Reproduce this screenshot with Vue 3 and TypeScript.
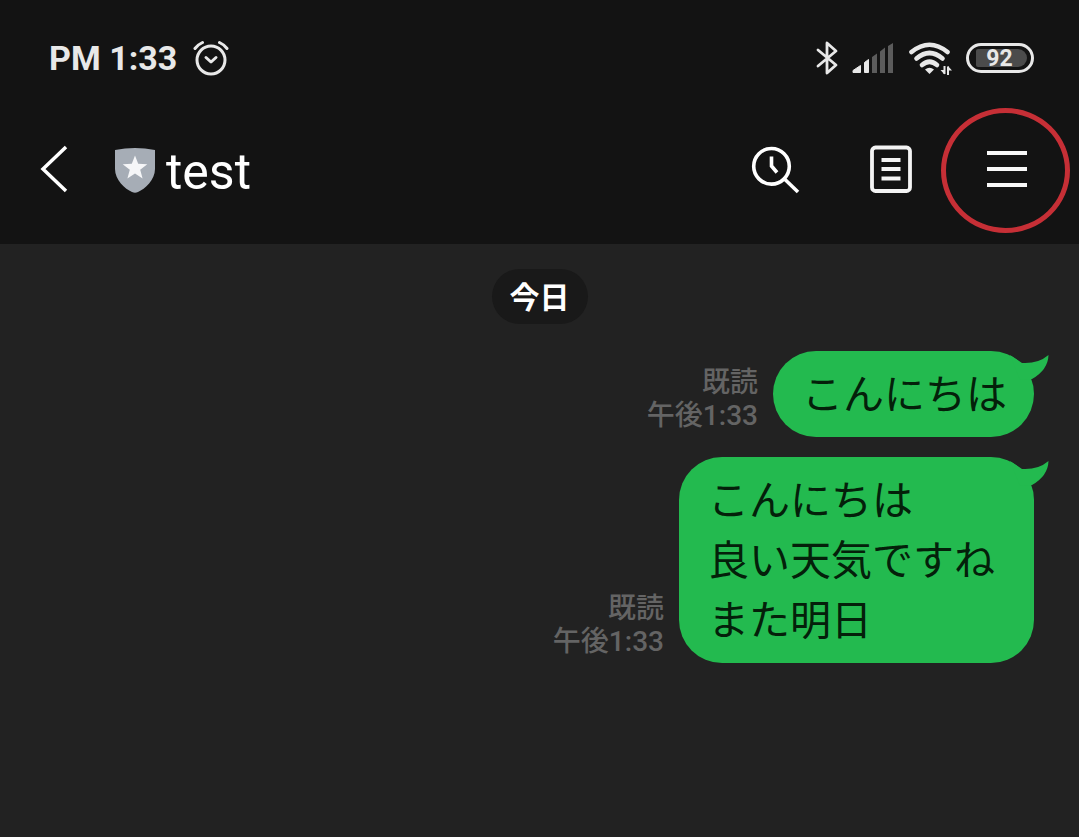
<script setup lang="ts">
interface Message {
  id: number
  lines: string[]
  read: string
  time: string
}

const title = 'test'
const battery = 92
const messages: Message[] = [
  { id: 1, lines: ['こんにちは'], read: '既読', time: '午後1:33' },
  { id: 2, lines: ['こんにちは', '良い天気ですね', 'また明日'], read: '既読', time: '午後1:33' },
]
</script>

<template>
  <div class="screen">
    <div class="status">
      <div class="clock">
        <span>PM 1:33</span>
        <svg class="alarm" width="36" height="36" viewBox="0 0 36 36" aria-hidden="true">
          <g fill="none" stroke="#e8e8e8" stroke-width="3" stroke-linecap="round" stroke-linejoin="round">
            <circle cx="18" cy="20" r="14" />
            <path d="M2 8.5Q5 4.5 9.5 2.5M34 8.5Q31 4.5 26.5 2.5" />
            <path d="M13 17.500L18 22L23 17.500" />
          </g>
        </svg>
      </div>
      <div class="indicators">
        <svg width="22" height="36" viewBox="0 0 22 36" aria-hidden="true">
          <path d="M2 10L20 25L11 33V3L20 11L2 26" fill="none" stroke="#e8e8e8" stroke-width="2.800" stroke-linejoin="round" stroke-linecap="round" />
        </svg>
        <svg class="signal" width="42" height="32" viewBox="0 0 42 32" aria-hidden="true">
          <path d="M1 30.500V28.500L8.500 23.500V30.500ZM12.500 20.500L16.500 17.500V30.500H12.500Z" fill="#e8e8e8" stroke="#e8e8e8" stroke-linejoin="round" />
          <path d="M20 15L25 11.500V31H20ZM28 9.500L33 5.500V31H28ZM36 4L41 1V31H36Z" fill="#5c5c5c" />
        </svg>
        <svg class="wifi" width="44" height="34" viewBox="0 0 44 34" aria-hidden="true">
          <g fill="none" stroke="#e8e8e8" stroke-width="4.600" stroke-linecap="round">
            <path d="M3.500 11Q21.500 -3.500 39.500 11" />
            <path d="M8.500 17.500Q21.500 6.500 34.500 17.500" />
            <path d="M14 24Q21.500 17.500 29 24" />
          </g>
          <path d="M17 28.500Q21.500 25 26 28.500L21.500 33Z" fill="#e8e8e8" />
          <path d="M36.500 25V33M40 34V25.500" fill="none" stroke="#e8e8e8" stroke-width="2" />
          <path d="M36.500 33.500L32.500 29H36.500ZM40 25L44 29.500H40Z" fill="#e8e8e8" />
        </svg>
        <div class="battery"><span class="level">{{ battery }}</span></div>
      </div>
    </div>

    <header class="bar">
      <button class="back" type="button" aria-label="戻る">
        <svg width="28" height="50" viewBox="0 0 28 50" aria-hidden="true">
          <path d="M26 2L3 24L26 46" fill="none" stroke="#fff" stroke-width="3.500" />
        </svg>
      </button>
      <svg class="shield" width="40" height="46" viewBox="0 0 40 46" aria-hidden="true">
        <path d="M0 3Q20 -1 40 3V22C40 33 30 42 23 45Q20 46.500 17 45C10 42 0 33 0 22Z" fill="#a6adb6" />
        <path d="M20 8.500L23.200 16.800L32.300 17.200L25.200 22.800L27.600 31.500L20 26.500L12.400 31.500L14.800 22.800L7.700 17.200L16.800 16.800Z" fill="#f5f6f8" />
      </svg>
      <h1>{{ title }}</h1>
      <div class="actions">
        <button type="button" aria-label="検索">
          <svg width="50" height="50" viewBox="0 0 50 50" aria-hidden="true">
            <g fill="none" stroke="#fff" stroke-width="3.600">
              <circle cx="21.500" cy="21.300" r="17.800" />
              <path d="M34.500 34L48 47" />
              <path d="M21.500 11.500V21L27 27.500" />
            </g>
          </svg>
        </button>
        <button type="button" aria-label="ノート">
          <svg width="50" height="50" viewBox="0 0 50 50" aria-hidden="true">
            <rect x="6" y="2.500" width="38" height="43.500" rx="3.500" fill="none" stroke="#f4f4f4" stroke-width="3.800" />
            <path d="M15.500 15H34.500M15.500 24H34.500M15.500 33.500H34.500" stroke="#f4f4f4" stroke-width="4" />
          </svg>
        </button>
        <button class="menu" type="button" aria-label="メニュー">
          <svg width="50" height="50" viewBox="0 0 50 50" aria-hidden="true">
            <path d="M5 8H45M5 24H45M5 40H45" stroke="#f8f8f8" stroke-width="3.800" />
          </svg>
          <span class="ring"></span>
        </button>
      </div>
    </header>

    <main class="chat">
      <div class="day">今日</div>
      <div v-for="m in messages" :key="m.id" class="message">
        <div class="meta">
          <span>{{ m.read }}</span>
          <span>{{ m.time }}</span>
        </div>
        <div class="bubble" :class="{ multi: m.lines.length > 1 }">
          <p v-for="line in m.lines" :key="line">{{ line }}</p>
          <svg class="tail" width="40" height="30" viewBox="0 0 40 30" aria-hidden="true">
            <path d="M0 4L12 12Q28 13 38.500 4Q38 19 22 28L10 29Z" fill="#23ba4f" />
          </svg>
        </div>
      </div>
    </main>
  </div>
</template>

<style>
body {
  margin: 0;
  background: #222;
}
</style>

<style scoped>
.screen {
  min-height: 100vh;
  background: #222;
  color: #fff;
  font-family: Roboto, "Noto Sans CJK JP", sans-serif;
  overflow: hidden;
}
.status {
  display: flex;
  justify-content: space-between;
  align-items: center;
  height: 96px;
  padding: 20px 45px 0 49px;
  box-sizing: border-box;
  background: #131313;
  color: #e8e8e8;
}
.clock {
  display: flex;
  align-items: center;
  gap: 16px;
  font-size: 34px;
  font-weight: 700;
  line-height: 40px;
}
.indicators {
  display: flex;
  align-items: center;
  gap: 14px;
}
.battery {
  width: 68px;
  height: 30px;
  box-sizing: border-box;
  padding: 3px 4px 3px 7px;
  border: 3px solid #e8e8e8;
  border-radius: 15px;
}
.level {
  display: block;
  height: 18px;
  padding-right: 4px;
  border-radius: 2px 9px 9px 2px;
  background: #4b4b4b;
  font-size: 23px;
  font-weight: 700;
  line-height: 19px;
  text-align: center;
}
.bar {
  display: flex;
  align-items: center;
  height: 148px;
  padding: 0 47px 0 40px;
  box-sizing: border-box;
  background: #131313;
}
button {
  display: block;
  padding: 0;
  border: 0;
  background: none;
  color: inherit;
}
svg {
  display: block;
  flex: none;
}
.shield {
  margin: 0 11px 0 47px;
}
h1 {
  margin: 0;
  padding-top: 4px;
  font-size: 50px;
  font-weight: 400;
  line-height: 60px;
}
.actions {
  display: flex;
  gap: 66px;
  margin-left: auto;
}
.menu {
  position: relative;
}
.ring {
  position: absolute;
  inset: -37px -38px -38px -41px;
  border: 5px solid #c62f36;
  border-radius: 50%;
}
.chat {
  display: flex;
  flex-direction: column;
  gap: 20px;
  padding: 25px 45px 40px;
}
.day {
  align-self: center;
  margin-bottom: 7px;
  padding: 2px 18px 0;
  border-radius: 28px;
  background: #191919;
  font-size: 30px;
  font-weight: 700;
  line-height: 53px;
}
.message {
  display: flex;
  justify-content: flex-end;
  align-items: flex-end;
  gap: 15px;
}
.meta {
  display: flex;
  flex-direction: column;
  align-items: flex-end;
  padding-bottom: 5px;
  color: #646464;
  font-size: 28px;
  font-weight: 500;
  line-height: 33px;
}
.bubble {
  position: relative;
  padding: 10px 27px 16px 29px;
  border-radius: 43px;
  background: #23ba4f;
  color: #04200a;
  font-family: "Noto Sans CJK JP", sans-serif;
  font-size: 41px;
  line-height: 60px;
}
.multi {
  padding-right: 39px;
}
.bubble p {
  margin: 0;
}
.tail {
  position: absolute;
  top: 0;
  right: -16px;
}
</style>
